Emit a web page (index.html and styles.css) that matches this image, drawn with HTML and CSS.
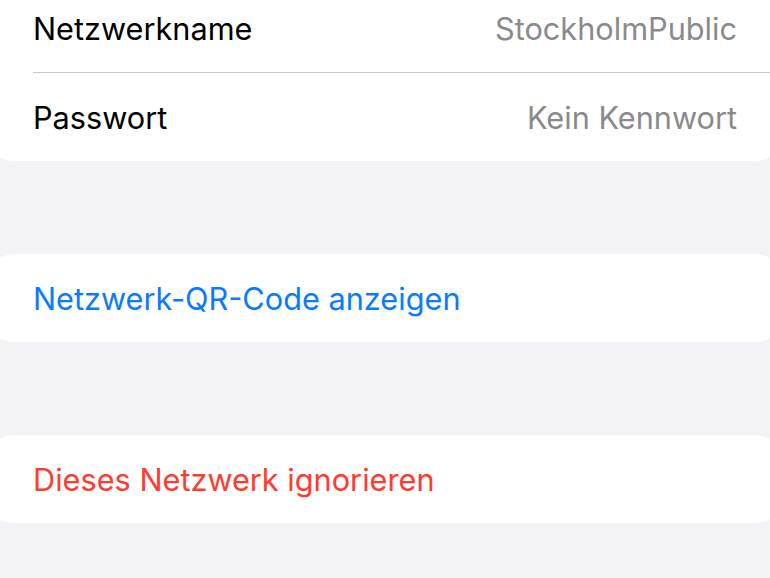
FILE: index.html
```html
<!DOCTYPE html>
<html lang="de">
<head>
    <meta charset="UTF-8">
    <meta name="viewport" content="width=device-width, initial-scale=1.0">
    <title>StockholmPublic</title>
    <link rel="stylesheet" href="styles.css">
</head>
<body>
    <div class="settings">
        <div class="group group-top">
            <div class="row">
                <span class="label">Netzwerkname</span>
                <span class="value">StockholmPublic</span>
            </div>
            <div class="row">
                <span class="label">Passwort</span>
                <span class="value">Kein Kennwort</span>
            </div>
        </div>

        <div class="group">
            <div class="row">
                <span class="label action">Netzwerk-QR-Code anzeigen</span>
            </div>
        </div>

        <div class="group">
            <div class="row">
                <span class="label danger">Dieses Netzwerk ignorieren</span>
            </div>
        </div>
    </div>
</body>
</html>
```

FILE: styles.css
```css
* {
    margin: 0;
    padding: 0;
    box-sizing: border-box;
}

body {
    font-family: Inter, "Noto Sans", sans-serif;
    background: #f2f2f7;
    color: #000;
    overflow: hidden;
}

.settings {
    display: flex;
    flex-direction: column;
    gap: 93px;
    margin: 0 -12px;
}

.group {
    background: #fff;
    border-radius: 26px;
    padding-left: 45px;
}

.group-top {
    margin-top: -16px;
}

.row {
    height: 88px;
    display: flex;
    align-items: center;
    justify-content: space-between;
    padding-right: 45px;
    font-size: 30.7px;
}

.row + .row {
    border-top: 1px solid #c8c8cc;
    height: 89px;
}

.value {
    color: #8a8a8e;
}

.action {
    color: #0a7aff;
}

.danger {
    color: #ff3b30;
}
```
